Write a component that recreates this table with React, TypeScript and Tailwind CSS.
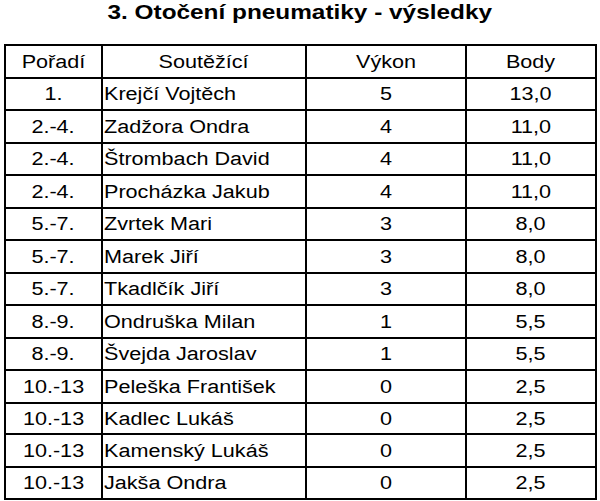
const rows = [
  { p: "1.", name: "Krejčí Vojtěch", v: "5", b: "13,0", h: "h-[32px]" },
  { p: "2.-4.", name: "Zadžora Ondra", v: "4", b: "11,0", h: "h-[33px]" },
  { p: "2.-4.", name: "Štrombach David", v: "4", b: "11,0", h: "h-[32px]" },
  { p: "2.-4.", name: "Procházka Jakub", v: "4", b: "11,0", h: "h-[33px]" },
  { p: "5.-7.", name: "Zvrtek Mari", v: "3", b: "8,0", h: "h-[32px]" },
  { p: "5.-7.", name: "Marek Jiří", v: "3", b: "8,0", h: "h-[33px]" },
  { p: "5.-7.", name: "Tkadlčík Jiří", v: "3", b: "8,0", h: "h-[32px]" },
  { p: "8.-9.", name: "Ondruška Milan", v: "1", b: "5,5", h: "h-[33px]" },
  { p: "8.-9.", name: "Švejda Jaroslav", v: "1", b: "5,5", h: "h-[32px]" },
  { p: "10.-13", name: "Peleška František", v: "0", b: "2,5", h: "h-[33px]" },
  { p: "10.-13", name: "Kadlec Lukáš", v: "0", b: "2,5", h: "h-[31px]" },
  { p: "10.-13", name: "Kamenský Lukáš", v: "0", b: "2,5", h: "h-[33px]" },
  { p: "10.-13", name: "Jakša Ondra", v: "0", b: "2,5", h: "h-[30px]" },
];

const Txt = ({ children, left }: { children: React.ReactNode; left?: boolean }) => (
  <span className={`inline-block scale-x-120 ${left ? "origin-left" : "origin-center"}`}>
    {children}
  </span>
);

const Row = ({
  cells,
  h,
  last,
}: {
  cells: string[];
  h: string;
  last?: boolean;
}) => (
  <div
    className={`grid grid-cols-[97px_204px_160px_128px] ${h} ${
      last ? "" : "border-b-2 border-black"
    }`}
  >
    <div className="flex items-center justify-center border-r-2 border-black">
      <Txt>{cells[0]}</Txt>
    </div>
    <div
      className={`flex items-center border-r-2 border-black ${
        cells[4] ? "justify-center" : "pl-[1px]"
      }`}
    >
      <Txt left={!cells[4]}>{cells[1]}</Txt>
    </div>
    <div className="flex items-center justify-center border-r-2 border-black">
      <Txt>{cells[2]}</Txt>
    </div>
    <div className="flex items-center justify-center">
      <Txt>{cells[3]}</Txt>
    </div>
  </div>
);

export default function App() {
  return (
    <div className="w-[600px] h-[501px] bg-white text-black font-['Liberation_Sans',Arial,sans-serif]">
      <h1 className="h-[44px] text-center text-[21px] font-bold leading-[21px] pt-px">
        <span className="inline-block scale-x-116">
          3. Otočení pneumatiky - výsledky
        </span>
      </h1>
      <div className="ml-[4px] w-[593px] border-2 border-black text-[18px] leading-none">
        <Row cells={["Pořadí", "Soutěžící", "Výkon", "Body", "c"]} h="h-[33px]" />
        {rows.map((r, i) => (
          <Row
            key={i}
            cells={[r.p, r.name, r.v, r.b]}
            h={r.h}
            last={i === rows.length - 1}
          />
        ))}
      </div>
    </div>
  );
}
